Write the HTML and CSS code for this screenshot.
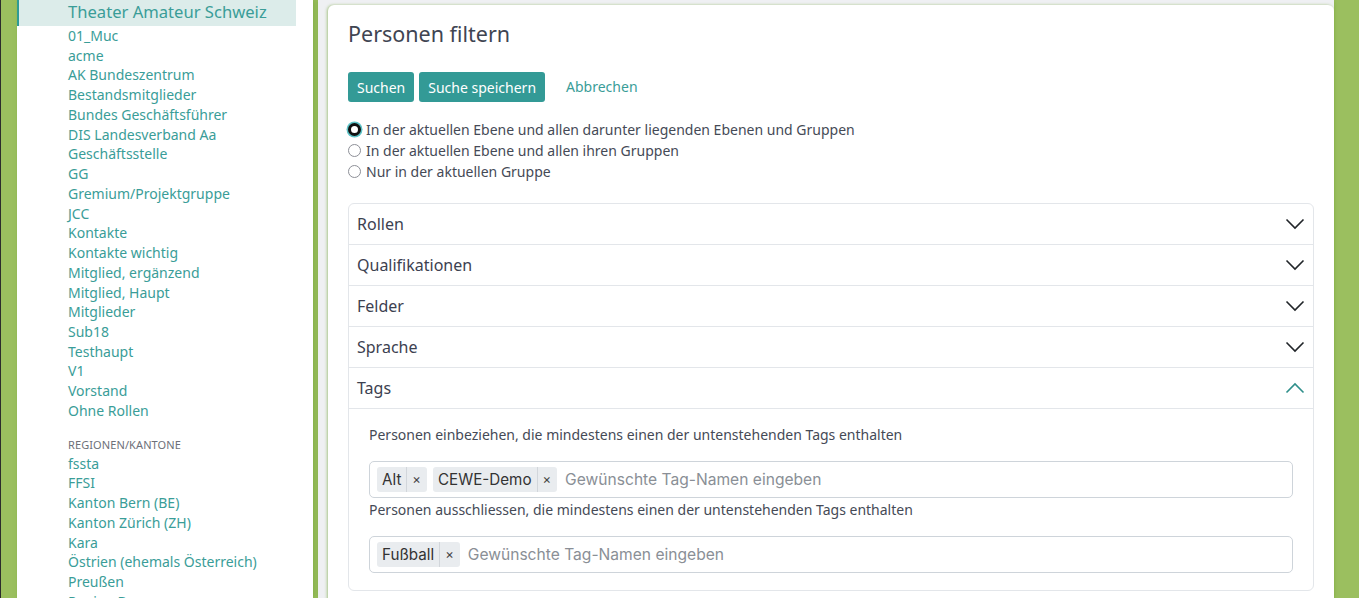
FILE: index.html
```html
<!DOCTYPE html>
<html lang="de">
<head>
<meta charset="utf-8">
<title>Personen filtern</title>
<link rel="stylesheet" href="styles.css">
</head>
<body>
<div class="page">
  <aside class="sidebar">
    <div class="nav-current">Theater Amateur Schweiz</div>
    <ul class="nav-list">
      <li>01_Muc</li>
      <li>acme</li>
      <li>AK Bundeszentrum</li>
      <li>Bestandsmitglieder</li>
      <li>Bundes Geschäftsführer</li>
      <li>DIS Landesverband Aa</li>
      <li>Geschäftsstelle</li>
      <li>GG</li>
      <li>Gremium/Projektgruppe</li>
      <li>JCC</li>
      <li>Kontakte</li>
      <li>Kontakte wichtig</li>
      <li>Mitglied, ergänzend</li>
      <li>Mitglied, Haupt</li>
      <li>Mitglieder</li>
      <li>Sub18</li>
      <li>Testhaupt</li>
      <li>V1</li>
      <li>Vorstand</li>
      <li>Ohne Rollen</li>
    </ul>
    <div class="nav-section">REGIONEN/KANTONE</div>
    <ul class="nav-list">
      <li>fssta</li>
      <li>FFSI</li>
      <li>Kanton Bern (BE)</li>
      <li>Kanton Zürich (ZH)</li>
      <li>Kara</li>
      <li>Östrien (ehemals Österreich)</li>
      <li>Preußen</li>
      <li>Region B</li>
    </ul>
  </aside>
  <main class="main">
    <div class="card">
      <h1 class="title">Personen filtern</h1>
      <div class="actions">
        <button class="btn">Suchen</button>
        <button class="btn">Suche speichern</button>
        <a class="cancel">Abbrechen</a>
      </div>
      <div class="radios">
        <label class="radio"><span class="dot checked"></span>In der aktuellen Ebene und allen darunter liegenden Ebenen und Gruppen</label>
        <label class="radio"><span class="dot"></span>In der aktuellen Ebene und allen ihren Gruppen</label>
        <label class="radio"><span class="dot"></span>Nur in der aktuellen Gruppe</label>
      </div>
      <div class="accordion">
        <div class="acc-head"><span>Rollen</span><svg class="chev" width="20" height="12" viewBox="0 0 20 12"><path d="M1.5 1.5 L10 10 L18.5 1.5" fill="none" stroke="#212529" stroke-width="1.6"/></svg></div>
        <div class="acc-head"><span>Qualifikationen</span><svg class="chev" width="20" height="12" viewBox="0 0 20 12"><path d="M1.5 1.5 L10 10 L18.5 1.5" fill="none" stroke="#212529" stroke-width="1.6"/></svg></div>
        <div class="acc-head"><span>Felder</span><svg class="chev" width="20" height="12" viewBox="0 0 20 12"><path d="M1.5 1.5 L10 10 L18.5 1.5" fill="none" stroke="#212529" stroke-width="1.6"/></svg></div>
        <div class="acc-head"><span>Sprache</span><svg class="chev" width="20" height="12" viewBox="0 0 20 12"><path d="M1.5 1.5 L10 10 L18.5 1.5" fill="none" stroke="#212529" stroke-width="1.6"/></svg></div>
        <div class="acc-head open"><span>Tags</span><svg class="chev" width="20" height="12" viewBox="0 0 20 12"><path d="M1.5 10.5 L10 2 L18.5 10.5" fill="none" stroke="#2f8f8b" stroke-width="1.6"/></svg></div>
        <div class="acc-body">
          <div class="field-label">Personen einbeziehen, die mindestens einen der untenstehenden Tags enthalten</div>
          <div class="tag-input">
            <span class="chip"><span class="chip-text">Alt</span><span class="chip-x">×</span></span>
            <span class="chip"><span class="chip-text">CEWE-Demo</span><span class="chip-x">×</span></span>
            <span class="placeholder">Gewünschte Tag-Namen eingeben</span>
          </div>
          <div class="field-label tight">Personen ausschliessen, die mindestens einen der untenstehenden Tags enthalten</div>
          <div class="tag-input">
            <span class="chip"><span class="chip-text">Fußball</span><span class="chip-x">×</span></span>
            <span class="placeholder">Gewünschte Tag-Namen eingeben</span>
          </div>
        </div>
      </div>
    </div>
  </main>
</div>
</body>
</html>
```
FILE: styles.css
```css
* { box-sizing: border-box; }
html, body { margin: 0; padding: 0; }
body {
  background: #9bbf5f;
  font-family: "Noto Sans", "Open Sans", sans-serif;
  height: 598px;
  overflow: hidden;
}
.page {
  display: flex;
  height: 598px;
  border-left: 1px solid #2c2c2c;
  padding-left: 16px;
}
.sidebar {
  width: 296px;
  flex: none;
  background: #fff;
  padding-right: 17px;
  box-shadow: 1px 0 4px rgba(110, 160, 50, 0.55);
  position: relative;
  z-index: 1;
}
.nav-current {
  height: 26px;
  line-height: 24px;
  background: #dcecea;
  border-left: 2px solid #2f9b95;
  padding-left: 49px;
  font-size: 16.6px;
  color: #3a9d98;
  white-space: nowrap;
}
.nav-list {
  list-style: none;
  margin: 0;
  padding: 0 0 0 51px;
}
.nav-list li {
  font-size: 14px;
  line-height: 19.74px;
  color: #3a9d98;
  white-space: nowrap;
}
.nav-section {
  padding-left: 51px;
  margin-top: 14px;
  font-size: 11px;
  line-height: 19px;
  color: #6d7079;
  letter-spacing: 0.1px;
}
.main {
  flex: none;
  width: 1016px;
  margin-left: 5px;
  background: #eff0f3;
  padding: 5px 0 0 10px;
  box-shadow: 0 0 4px rgba(110, 160, 50, 0.5);
}
.card {
  background: #fff;
  border-radius: 6px;
  height: 620px;
  padding: 15px 20px 20px 20px;
  box-shadow: -1px 0 3px rgba(110, 160, 50, 0.55);
}
.title {
  margin: 0;
  font-weight: 400;
  font-size: 21.5px;
  line-height: 28px;
  color: #3f4552;
}
.actions {
  display: flex;
  align-items: center;
  gap: 5px;
  margin-top: 24px;
}
.btn {
  font-family: "Noto Sans", sans-serif;
  font-size: 14px;
  height: 30px;
  padding: 0 9px;
  border: 0;
  border-radius: 3px;
  background: #339a96;
  color: #fff;
}
.cancel {
  margin-left: 16px;
  font-size: 14px;
  color: #3a9d98;
  padding-bottom: 2px;
}
.radios {
  margin-top: 17px;
  display: flex;
  flex-direction: column;
}
.radio {
  display: flex;
  align-items: center;
  font-size: 14px;
  line-height: 21px;
  color: #454a56;
}
.dot {
  width: 13px;
  height: 13px;
  border-radius: 50%;
  border: 1.5px solid #8d8f97;
  margin-right: 5px;
  flex: none;
}
.dot.checked {
  border: 3.5px solid #111;
  box-shadow: 0 0 0 1.5px #5ec3c7;
  background: #fff;
}
.accordion {
  margin-top: 21px;
  border: 1px solid #e3e6ea;
  border-radius: 6px;
}
.acc-head {
  height: 41px;
  display: flex;
  align-items: center;
  justify-content: space-between;
  padding: 0 8px 0 8px;
  font-size: 16px;
  color: #3c4150;
  border-top: 1px solid #e3e6ea;
}
.acc-head:first-child { border-top: 0; height: 40px; }
.acc-body {
  border-top: 1px solid #e3e6ea;
  padding: 16px 20px 17px 20px;
}
.field-label {
  font-size: 14px;
  line-height: 20px;
  color: #454a56;
  margin-bottom: 16px;
}
.field-label.tight { margin-top: 2px; }
.tag-input {
  height: 37px;
  border: 1px solid #ced4da;
  border-radius: 5px;
  display: flex;
  align-items: center;
  padding: 0 7px;
  gap: 6px;
  font-family: "Inter", sans-serif;
  font-size: 16px;
}
.chip {
  display: flex;
  align-items: center;
  height: 25px;
  background: #e9ecef;
  border-radius: 3px;
  color: #333;
}
.chip-text { padding: 0 5px 0 5px; font-size: 15.2px; }
.chip-x {
  font-size: 13px;
  color: #444;
  border-left: 1px solid #d2d6db;
  padding: 0 6px 0 5px;
  line-height: 25px;
}
.placeholder {
  color: #8a8f96;
  margin-left: 2px;
  font-size: 15.6px;
}
```
